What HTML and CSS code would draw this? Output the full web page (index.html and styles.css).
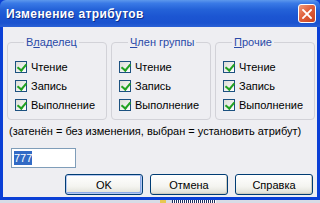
FILE: index.html
```html
<!DOCTYPE html>
<html lang="ru">
<head>
    <meta charset="UTF-8">
    <meta name="viewport" content="width=device-width, initial-scale=1.0">
    <title>Изменение атрибутов</title>
    <link rel="stylesheet" href="styles.css">
</head>
<body>
    <div class="window">
        <div class="titlebar">
            <span class="title">Изменение атрибутов</span>
            <button class="close-btn" aria-label="Закрыть">
                <svg width="10" height="10" viewBox="0 0 10 10">
                    <path d="M1 1 L9 9 M9 1 L1 9" stroke="#fff" stroke-width="1.8" stroke-linecap="square"/>
                </svg>
            </button>
        </div>

        <div class="client">
            <div class="groups">
                <fieldset class="group">
                    <legend>В<u>л</u>аделец</legend>
                    <label class="check-row"><span class="check"></span>Чтение</label>
                    <label class="check-row"><span class="check"></span>Запись</label>
                    <label class="check-row"><span class="check"></span>Выполнение</label>
                </fieldset>
                <fieldset class="group">
                    <legend><u>Ч</u>лен группы</legend>
                    <label class="check-row"><span class="check"></span>Чтение</label>
                    <label class="check-row"><span class="check"></span>Запись</label>
                    <label class="check-row"><span class="check"></span>Выполнение</label>
                </fieldset>
                <fieldset class="group">
                    <legend><u>П</u>рочие</legend>
                    <label class="check-row"><span class="check"></span>Чтение</label>
                    <label class="check-row"><span class="check"></span>Запись</label>
                    <label class="check-row"><span class="check"></span>Выполнение</label>
                </fieldset>
            </div>

            <p class="hint">(затенён = без изменения, выбран = установить атрибут)</p>

            <div class="octal-field"><span class="selected">777</span></div>

            <div class="btn-group">
                <button class="btn btn-default">OK</button>
                <button class="btn">Отмена</button>
                <button class="btn">Справка</button>
            </div>
        </div>
    </div>
    <div class="taskbar">
        <span class="tray-icon"></span>
        <span class="tray-dots"></span>
    </div>
</body>
</html>
```

FILE: styles.css
```css
* {
    margin: 0;
    padding: 0;
    box-sizing: border-box;
    font-family: "Liberation Sans", Arial, sans-serif;
}

body {
    background-color: #d8dce6;
    width: 320px;
    height: 203px;
    overflow: hidden;
}

.window {
    width: 320px;
    background-color: #0a3fd6;
    padding: 0 3px 3px 3px;
}

.titlebar {
    height: 27px;
    margin: 0 -3px;
    padding: 0 4px 0 6px;
    display: flex;
    align-items: center;
    justify-content: space-between;
    background: linear-gradient(#5d98ec 0%, #3a7ae6 12%, #2462d8 35%, #1c56d2 60%, #1a52cf 85%, #2a60d6 100%);
    border-radius: 6px 6px 0 0;
}

.title {
    color: white;
    font-weight: bold;
    font-size: 12px;
    letter-spacing: 0.4px;
    text-shadow: 1px 1px 0 #0f2d8a;
    margin-top: 1px;
}

.close-btn {
    width: 18px;
    height: 19px;
    border: 1px solid #fff;
    border-radius: 3px;
    background: linear-gradient(135deg, #f09a7a 0%, #e0603c 45%, #c94420 100%);
    display: flex;
    align-items: center;
    justify-content: center;
}

.client {
    background-color: #eeeef2;
    padding: 9px 2px 2px 4px;
    display: flex;
    flex-direction: column;
}

.groups {
    display: flex;
    gap: 4px;
}

.group {
    width: 100px;
    border: 1px solid #d2d2d8;
    border-radius: 4px;
    padding: 8px 0 5px 7px;
    min-inline-size: 0;
}

.group legend {
    font-size: 11px;
    line-height: 13px;
    color: #2a4aa8;
    margin-left: 9px;
    padding: 0 2px;
}

.group legend u {
    text-decoration-thickness: 1px;
    text-underline-offset: 1px;
}

.check-row {
    display: flex;
    align-items: center;
    height: 19px;
    font-size: 11px;
    color: #000;
}

.check {
    width: 12px;
    height: 12px;
    border: 1px solid #1c5180;
    background: linear-gradient(135deg, #dcdcd7 0%, #f4f4f2 70%, #ffffff 100%);
    margin-right: 4px;
    position: relative;
}

.check::after {
    content: "";
    position: absolute;
    left: 3px;
    top: 0px;
    width: 4px;
    height: 7px;
    border: solid #21a121;
    border-width: 0 2px 2px 0;
    transform: rotate(40deg);
}

.hint {
    font-size: 11px;
    line-height: 13px;
    margin: 5px 0 0 2px;
    color: #000;
    white-space: nowrap;
}

.octal-field {
    width: 65px;
    height: 20px;
    margin: 10px 0 0 4px;
    background: white;
    border: 1px solid #7f9db9;
    font-size: 11px;
    padding: 3px 0 0 2px;
}

.selected {
    background-color: #316ac5;
    color: white;
    padding: 1px 0;
}

.btn-group {
    display: flex;
    justify-content: flex-end;
    gap: 7px;
    margin: 6px 2px 0 0;
}

.btn {
    width: 78px;
    height: 21px;
    border: 1px solid #003c74;
    border-radius: 3px;
    background: linear-gradient(#ffffff 0%, #f4f4f0 60%, #e4e4dc 90%, #d6d0c5 100%);
    font-size: 11px;
    color: #000;
    box-shadow: inset -1px -1px 0 #d0cdc0;
}

.btn-default {
    box-shadow: inset 0 0 0 1px #b4c8f0, inset -1px -1px 0 1px #8aa8e8;
}

.taskbar {
    height: 3px;
    display: flex;
    align-items: center;
    padding-left: 160px;
    gap: 6px;
}

.tray-icon {
    width: 6px;
    height: 3px;
    background: #e8c850;
}

.tray-dots {
    width: 44px;
    height: 3px;
    background: repeating-linear-gradient(90deg, #203060 0 1px, #ffffff 1px 2px);
}
```
